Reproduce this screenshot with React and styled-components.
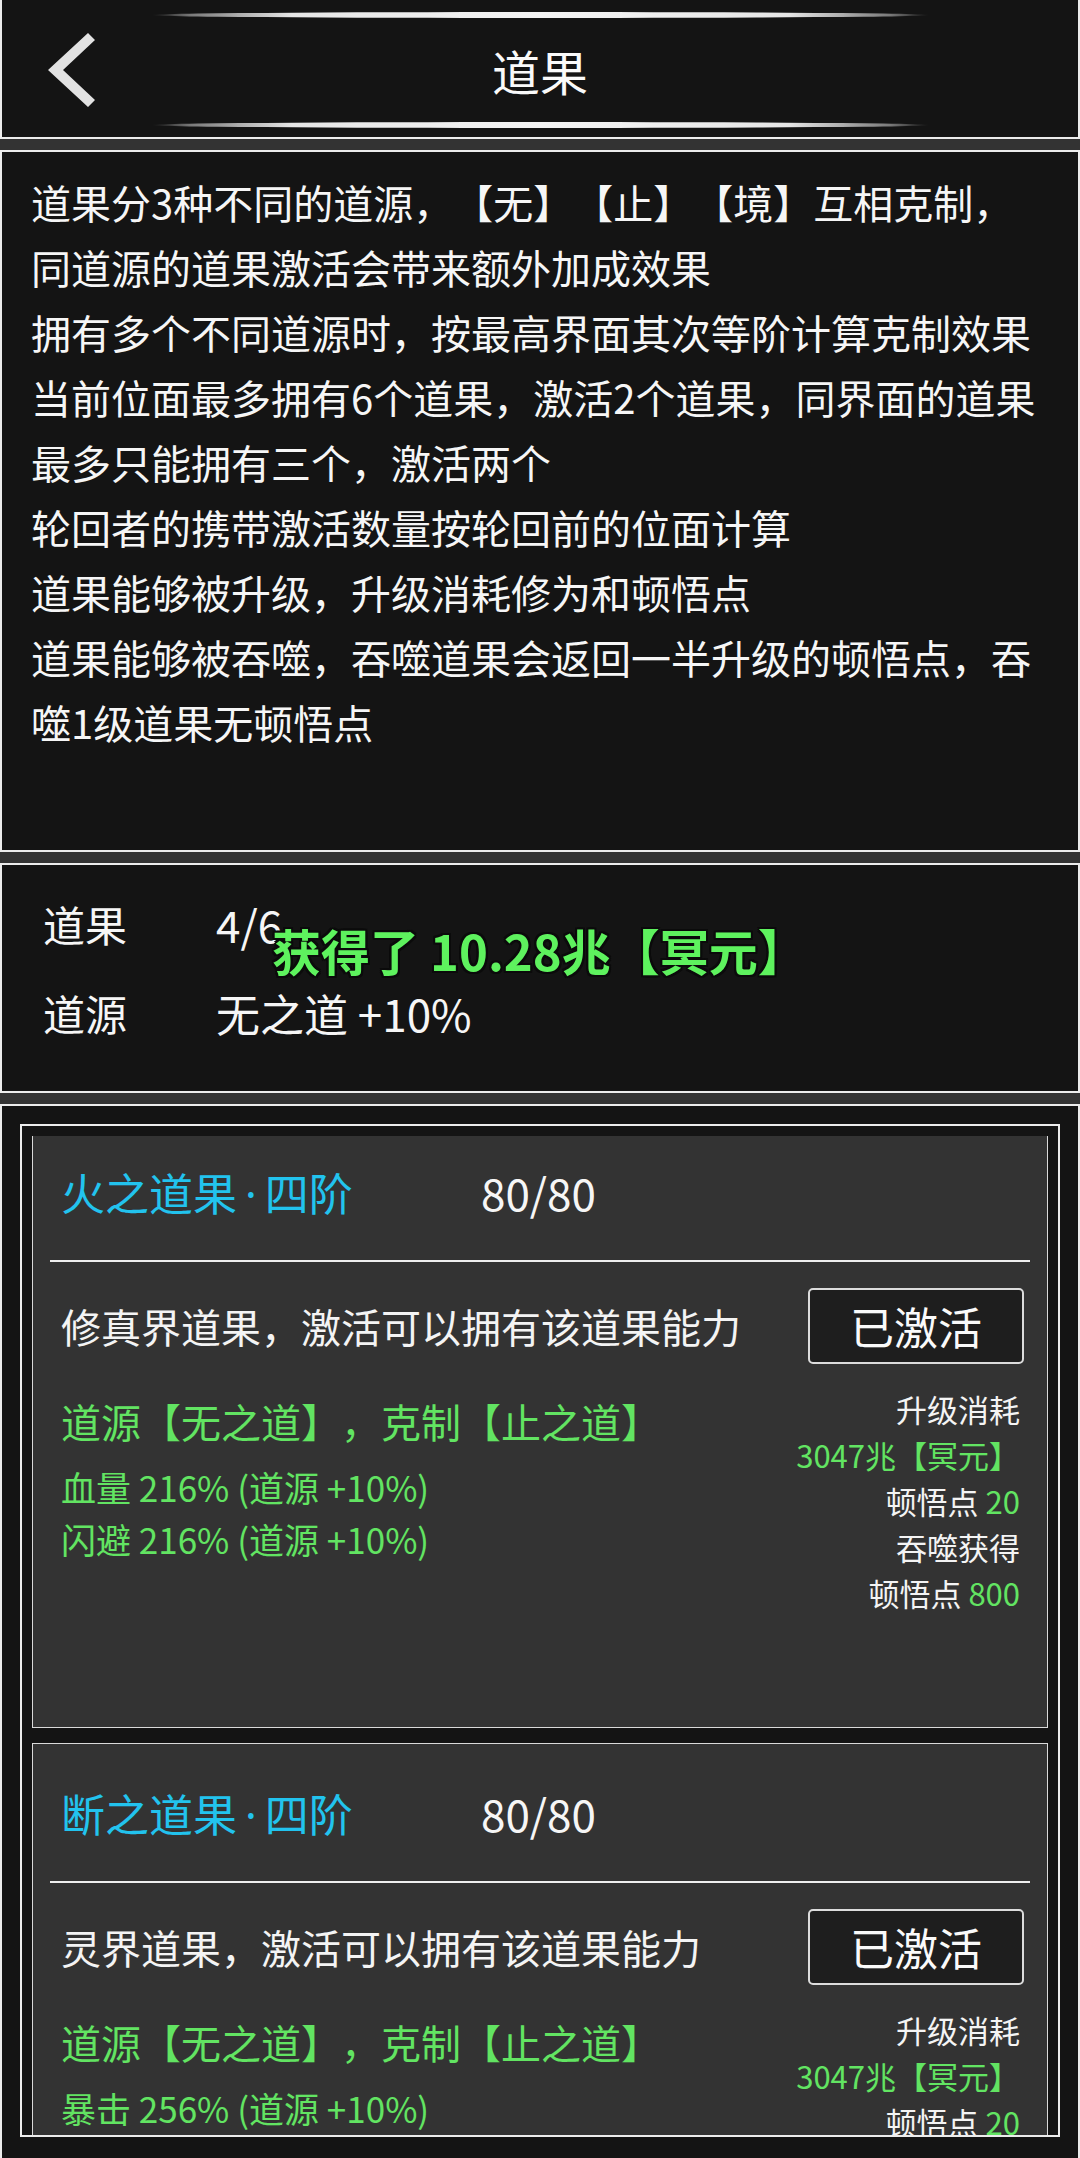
import React from "react";
import styled, { createGlobalStyle, css } from "styled-components";

const GlobalStyle = createGlobalStyle`
  *, *::before, *::after {
    box-sizing: border-box;
  }

  html,
  body {
    margin: 0;
    padding: 0;
    background: #333333;
  }

  body {
    font-family: "Noto Sans CJK SC", "Noto Sans", sans-serif;
    color: #f4f4f4;
    text-spacing-trim: space-all;
  }
`;

const Page = styled.div`
  width: 1080px;
  height: 2158px;
  display: flex;
  flex-direction: column;
  gap: 11px;
  overflow: hidden;
  background: #333333;
`;

const Header = styled.header`
  height: 139px;
  flex-shrink: 0;
  display: flex;
  flex-direction: column;
  align-items: center;
  padding-top: 12px;
  background: #141414;
  border: 2px solid #ececec;
  border-top: none;
`;

const GlowBar = styled.div`
  width: 777px;
  height: 6px;
  border-radius: 50%;
  background: linear-gradient(
    90deg,
    rgba(255, 255, 255, 0) 0%,
    #7a7a7a 5%,
    #e6e6e6 18%,
    #f4f4f4 50%,
    #e6e6e6 82%,
    #7a7a7a 95%,
    rgba(255, 255, 255, 0) 100%
  );
`;

const HeaderRow = styled.div`
  width: 100%;
  height: 104px;
  display: grid;
  grid-template-columns: 1fr auto 1fr;
  align-items: center;
`;

const BackButton = styled.div`
  margin-left: 44px;
  width: 50px;
  height: 76px;
  display: flex;
  align-items: center;
`;

const HeaderTitle = styled.h1`
  margin: 0;
  font-size: 48px;
  font-weight: 400;
  line-height: 1;
  color: #fafafa;
`;

const Panel = styled.section`
  position: relative;
  flex-shrink: 0;
  background: #141414;
  border: 2px solid #ececec;

  ${props =>
    props.$desc &&
    css`
      height: 702px;
      padding: 18px 20px 0 29px;
    `}

  ${props =>
    props.$stats &&
    css`
      height: 230px;
      padding: 14px 0 0 41px;
    `}

  ${props =>
    props.$list &&
    css`
      flex: 1;
      min-height: 0;
      display: flex;
      flex-direction: column;
      padding: 18px 18px 21px;
      border-bottom: none;
    `}
`;

const DescLine = styled.div`
  font-size: 40px;
  line-height: 65px;
  white-space: nowrap;
  color: #f6f6f6;
`;

const StatRow = styled.div`
  display: grid;
  grid-template-columns: 173px auto;
  align-items: center;
  height: 89px;
  font-size: 42px;
  color: #f6f6f6;
`;

const StatValue = styled.span`
  font-size: 44px;
`;

const Toast = styled.div`
  position: absolute;
  left: 270px;
  top: 55px;
  font-size: 49px;
  font-weight: 700;
  line-height: 60px;
  white-space: nowrap;
  color: #5ef25e;
  text-shadow: -2px -2px 0 #0b0b0b, 2px -2px 0 #0b0b0b, -2px 2px 0 #0b0b0b,
    2px 2px 0 #0b0b0b, 0 2px 0 #0b0b0b, 0 -2px 0 #0b0b0b, 2px 0 0 #0b0b0b,
    -2px 0 0 #0b0b0b;
`;

const Frame = styled.div`
  flex: 1;
  min-height: 0;
  display: flex;
  flex-direction: column;
  padding: 10px 10px 0;
  border: 2px solid #ececec;
`;

const Scroller = styled.div`
  flex: 1;
  min-height: 0;
  overflow: hidden;
`;

const CardList = styled.div`
  display: flex;
  flex-direction: column;
  gap: 15px;
  margin-top: -14px;
`;

const Card = styled.div`
  flex-shrink: 0;
  height: 606px;
  padding: 0 17px;
  background: #333333;
  border: 1px solid #dadada;
`;

const TitleRow = styled.div`
  height: 137px;
  display: flex;
  align-items: center;
  padding-left: 11px;
  font-size: 44px;
`;

const CardTitle = styled.div`
  width: 420px;
  color: #22c3ee;
`;

const Dot = styled.span`
  font-family: "Noto Sans", sans-serif;
  margin: 0 8px;
`;

const Count = styled.div`
  color: #f6f6f6;
`;

const Divider = styled.div`
  height: 2px;
  background: #efefef;
`;

const DescRow = styled.div`
  display: flex;
  align-items: center;
  justify-content: space-between;
  padding-top: 26px;
`;

const CardDesc = styled.div`
  padding-left: 11px;
  font-size: 40px;
  color: #f4f4f4;
`;

const StateButton = styled.button`
  width: 216px;
  height: 76px;
  margin-right: 6px;
  padding: 0;
  font-family: inherit;
  font-size: 44px;
  color: #fafafa;
  background: #1e1e1e;
  border: 2px solid #dcdcdc;
  border-radius: 5px;
`;

const CardBody = styled.div`
  display: flex;
  justify-content: space-between;
  align-items: flex-start;
  padding-top: 22px;
`;

const Effects = styled.div`
  padding: 7px 0 0 11px;
  color: #62e462;
`;

const EffectHead = styled.div`
  margin-bottom: 12px;
  font-size: 40px;
  line-height: 56px;
`;

const EffectLine = styled.div`
  font-size: 35px;
  line-height: 52px;
`;

const Costs = styled.div`
  padding-right: 10px;
  text-align: right;
  font-size: 31px;
  line-height: 46px;
  color: #f4f4f4;
`;

const Green = styled.span`
  color: #62e462;
`;

const rules = [
  "道果分3种不同的道源，【无】【止】【境】互相克制，",
  "同道源的道果激活会带来额外加成效果",
  "拥有多个不同道源时，按最高界面其次等阶计算克制效果",
  "当前位面最多拥有6个道果，激活2个道果，同界面的道果",
  "最多只能拥有三个，激活两个",
  "轮回者的携带激活数量按轮回前的位面计算",
  "道果能够被升级，升级消耗修为和顿悟点",
  "道果能够被吞噬，吞噬道果会返回一半升级的顿悟点，吞",
  "噬1级道果无顿悟点",
];

const fruits = [
  {
    name: "火之道果",
    tier: "四阶",
    level: "80/80",
    desc: "修真界道果，激活可以拥有该道果能力",
    effects: ["血量 216% (道源 +10%)", "闪避 216% (道源 +10%)"],
  },
  {
    name: "断之道果",
    tier: "四阶",
    level: "80/80",
    desc: "灵界道果，激活可以拥有该道果能力",
    effects: ["暴击 256% (道源 +10%)"],
  },
];

function BackIcon() {
  return (
    <svg width="50" height="76" viewBox="0 0 50 76">
      <polygon points="42,1 49,8 17,38 49,68 42,75 2,38" fill="#e2e2e2" />
    </svg>
  );
}

function FruitCard({ fruit }) {
  return (
    <Card>
      <TitleRow>
        <CardTitle>
          {fruit.name}
          <Dot>·</Dot>
          {fruit.tier}
        </CardTitle>
        <Count>{fruit.level}</Count>
      </TitleRow>
      <Divider />
      <DescRow>
        <CardDesc>{fruit.desc}</CardDesc>
        <StateButton>已激活</StateButton>
      </DescRow>
      <CardBody>
        <Effects>
          <EffectHead>道源【无之道】，克制【止之道】</EffectHead>
          {fruit.effects.map(e => (
            <EffectLine key={e}>{e}</EffectLine>
          ))}
        </Effects>
        <Costs>
          <div>升级消耗</div>
          <Green as="div">3047兆【冥元】</Green>
          <div>
            顿悟点 <Green>20</Green>
          </div>
          <div>吞噬获得</div>
          <div>
            顿悟点 <Green>800</Green>
          </div>
        </Costs>
      </CardBody>
    </Card>
  );
}

function App() {
  return (
    <Page>
      <GlobalStyle />
      <Header>
        <GlowBar />
        <HeaderRow>
          <BackButton>
            <BackIcon />
          </BackButton>
          <HeaderTitle>道果</HeaderTitle>
          <div />
        </HeaderRow>
        <GlowBar />
      </Header>

      <Panel $desc>
        {rules.map(line => (
          <DescLine key={line}>{line}</DescLine>
        ))}
      </Panel>

      <Panel $stats>
        <StatRow>
          <span>道果</span>
          <StatValue>4/6</StatValue>
        </StatRow>
        <StatRow>
          <span>道源</span>
          <StatValue>无之道 +10%</StatValue>
        </StatRow>
        <Toast>获得了 10.28兆【冥元】</Toast>
      </Panel>

      <Panel $list>
        <Frame>
          <Scroller>
            <CardList>
              {fruits.map(f => (
                <FruitCard key={f.name} fruit={f} />
              ))}
            </CardList>
          </Scroller>
        </Frame>
      </Panel>
    </Page>
  );
}

export default App;
